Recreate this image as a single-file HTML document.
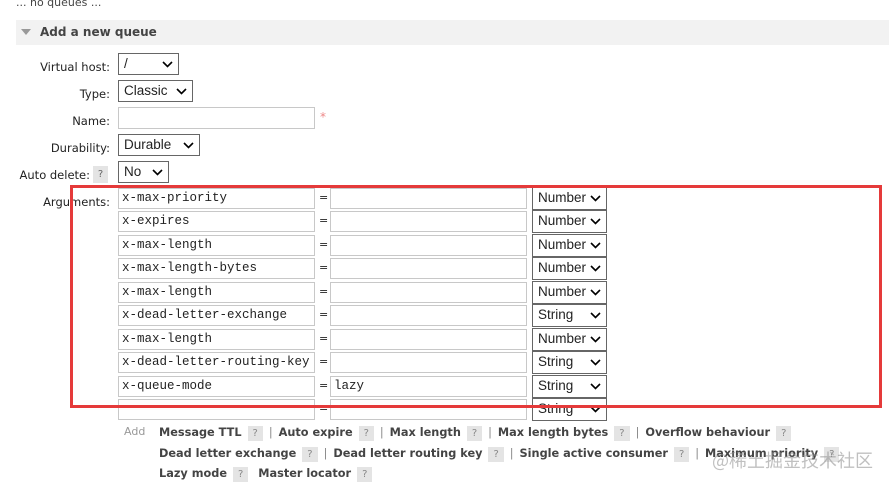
<!DOCTYPE html><html><head><style>
body{margin:0;width:889px;height:487px;background:#fff;font-family:Verdana,"DejaVu Sans",sans-serif;font-size:11px;color:#222;position:relative;overflow:hidden}
.a{position:absolute}
.lbl{position:absolute;text-align:right;width:110px;left:0;font-size:11.5px}
.inp{position:absolute;border:1px solid #c8c8c8;background:#fff;box-sizing:border-box;font-family:"Liberation Mono",monospace;font-size:12.5px;padding:2px 3px;line-height:15px}
.sel{position:absolute;border:1px solid #666;background:#fff;box-sizing:border-box;font-family:"Liberation Sans",sans-serif;font-size:13.5px;padding:1px 5px;line-height:18px}
.sel svg{position:absolute;right:5px;top:7px}
.q{display:inline-block;background:#e4e4e4;color:#888;font-size:10px;padding:2px 5px;margin:0 6px 0 6px;font-weight:normal}
.lk{position:absolute;left:159px;font-family:"DejaVu Sans",sans-serif;font-weight:bold;font-size:11.3px;color:#444;white-space:nowrap}
.sep{color:#888;font-weight:normal;margin-right:2px}
</style></head><body>
<div class="a" style="left:16px;top:-4px;font-size:11px;color:#444">... no queues ...</div>
<div class="a" style="left:16px;top:20px;width:873px;height:25px;background:#f2f2f2"></div>
<div class="a" style="left:21px;top:29px;width:0;height:0;border-left:5px solid transparent;border-right:5px solid transparent;border-top:6px solid #999"></div>
<div class="a" style="left:40px;top:25px;font-weight:bold;font-size:12px;color:#444">Add a new queue</div>
<div class="lbl" style="top:60px">Virtual host:</div>
<div class="lbl" style="top:87px">Type:</div>
<div class="lbl" style="top:114px">Name:</div>
<div class="lbl" style="top:141px">Durability:</div>
<div class="lbl" style="top:168px;width:90px">Auto delete:</div>
<div class="a" style="left:93px;top:166px;width:15px;height:17px;background:#e4e4e4;color:#666;font-size:10px;text-align:center;line-height:17px">?</div>
<div class="lbl" style="top:195px">Arguments:</div>
<div class="sel" style="left:118px;top:53px;width:61px;height:22px">/<svg width="11" height="7"><path d="M1 1l4.5 4.5L10 1" stroke="#000" stroke-width="1.6" fill="none"/></svg></div>
<div class="sel" style="left:118px;top:80px;width:75px;height:22px">Classic<svg width="11" height="7"><path d="M1 1l4.5 4.5L10 1" stroke="#000" stroke-width="1.6" fill="none"/></svg></div>
<div class="inp" style="left:118px;top:107px;width:197px;height:22px"></div>
<div class="a" style="left:320px;top:110px;color:#e88;font-size:12px">*</div>
<div class="sel" style="left:118px;top:134px;width:82px;height:22px">Durable<svg width="11" height="7"><path d="M1 1l4.5 4.5L10 1" stroke="#000" stroke-width="1.6" fill="none"/></svg></div>
<div class="sel" style="left:118px;top:161px;width:51px;height:22px">No<svg width="11" height="7"><path d="M1 1l4.5 4.5L10 1" stroke="#000" stroke-width="1.6" fill="none"/></svg></div>
<div id="rows"></div>
<div class="a" style="left:70px;top:185px;width:806px;height:217px;border:3px solid #e53a3a"></div>
<div class="a" style="left:124px;top:425px;color:#999;font-size:11px">Add</div>
<div class="lk" style="top:426px">Message TTL<span class="q">?</span><span class="sep">|</span> Auto expire<span class="q">?</span><span class="sep">|</span> Max length<span class="q">?</span><span class="sep">|</span> Max length bytes<span class="q">?</span><span class="sep">|</span> Overflow behaviour<span class="q">?</span></div>
<div class="lk" style="top:447px">Dead letter exchange<span class="q">?</span><span class="sep">|</span> Dead letter routing key<span class="q">?</span><span class="sep">|</span> Single active consumer<span class="q">?</span><span class="sep">|</span> Maximum priority<span class="q">?</span></div>
<div class="lk" style="top:467px">Lazy mode<span class="q">?</span> Master locator<span class="q">?</span></div>
<div class="a" style="left:712px;top:447px;font-family:'Noto Sans CJK SC',sans-serif;font-size:18px;color:rgba(150,150,150,0.6);white-space:nowrap">@稀土掘金技术社区</div>
<script>
var d=[["x-max-priority","","Number"],["x-expires","","Number"],["x-max-length","","Number"],["x-max-length-bytes","","Number"],["x-max-length","","Number"],["x-dead-letter-exchange","","String"],["x-max-length","","Number"],["x-dead-letter-routing-key","","String"],["x-queue-mode","lazy","String"],["","","String"]];
var h="";var ar='<svg width="11" height="7"><path d="M1 1l4.5 4.5L10 1" stroke="#000" stroke-width="1.6" fill="none"/></svg>';
d.forEach(function(r,i){var t=Math.round(188+i*23.45);
h+='<div class="inp" style="left:118px;top:'+t+'px;width:197px;height:21px">'+r[0]+'</div>';
h+='<div class="a" style="left:319px;top:'+(t+3)+'px;font-size:11px">=</div>';
h+='<div class="inp" style="left:330px;top:'+t+'px;width:197px;height:21px">'+r[1]+'</div>';
h+='<div class="sel" style="left:532px;top:'+(t-1)+'px;width:75px;height:23px">'+r[2]+ar+'</div>';});
document.getElementById("rows").innerHTML=h;
</script>
</body></html>
